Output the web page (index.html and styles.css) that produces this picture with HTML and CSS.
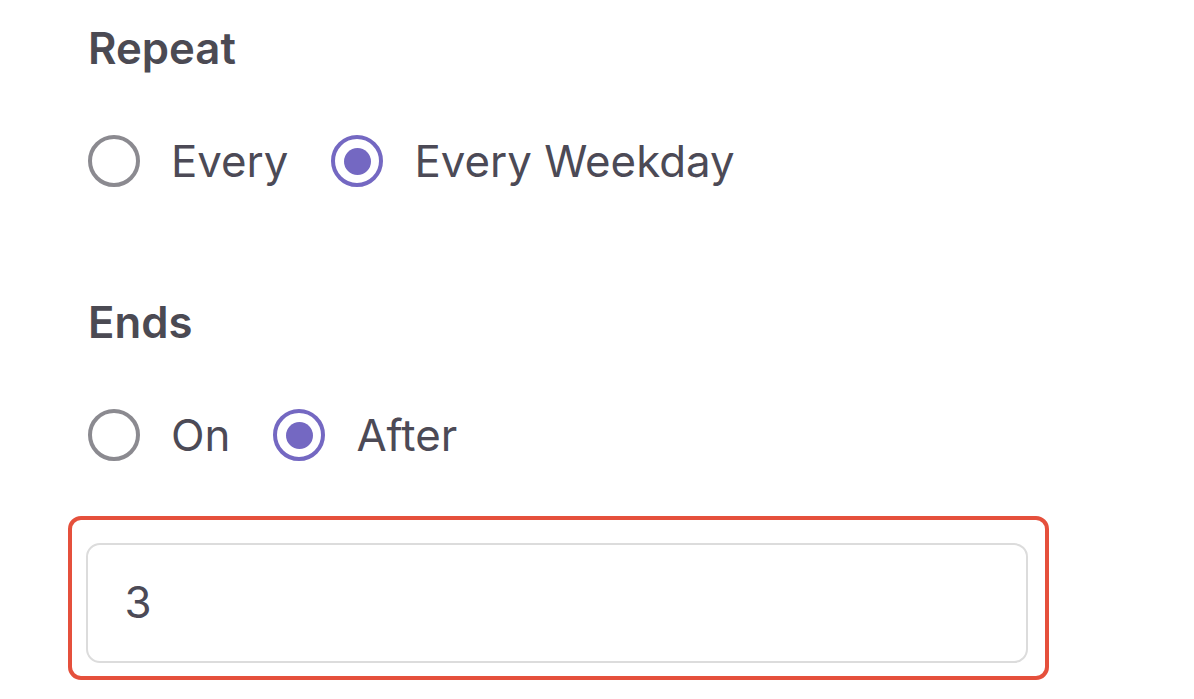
FILE: index.html
```html
<!DOCTYPE html>
<html lang="en">
<head>
<meta charset="utf-8">
<title>Repeat settings</title>
<link rel="stylesheet" href="styles.css">
</head>
<body>
<form class="form">
  <section class="section section-repeat">
    <h2 class="heading">Repeat</h2>
    <div class="options">
      <label class="option"><span class="radio"></span><span class="option-text">Every</span></label>
      <label class="option"><span class="radio radio-checked"></span><span class="option-text">Every Weekday</span></label>
    </div>
  </section>
  <section class="section section-ends">
    <h2 class="heading">Ends</h2>
    <div class="options">
      <label class="option"><span class="radio"></span><span class="option-text">On</span></label>
      <label class="option"><span class="radio radio-checked"></span><span class="option-text">After</span></label>
    </div>
  </section>
  <div class="highlight">
    <div class="input">3</div>
  </div>
</form>
</body>
</html>
```

FILE: styles.css
```css
html, body {
  margin: 0;
  padding: 0;
  background: #ffffff;
}

body {
  width: 1194px;
  height: 699px;
  overflow: hidden;
  font-family: Inter, "Noto Sans", sans-serif;
  color: #4c4a56;
}

.form {
  padding: 22px 0 0 68px;
}

.section {
  margin-left: 20px;
}

.section-ends {
  margin-top: 107px;
}

.heading {
  margin: 0;
  font-size: 43.7px;
  line-height: 53px;
  font-weight: 600;
  color: #4b4a53;
}

.options {
  display: flex;
  align-items: center;
  gap: 43px;
  margin-top: 58px;
  height: 56px;
}

.option {
  display: flex;
  align-items: center;
  gap: 31px;
}

.option-text {
  font-size: 43.8px;
  line-height: 53px;
  font-weight: 400;
}

.radio {
  box-sizing: border-box;
  width: 52px;
  height: 52px;
  border-radius: 50%;
  border: 4.5px solid #8b8a90;
  display: flex;
  align-items: center;
  justify-content: center;
}

.radio-checked {
  border-color: #7468c2;
}

.radio-checked::after {
  content: "";
  width: 27px;
  height: 27px;
  border-radius: 50%;
  background: #7468c2;
}

.highlight {
  margin-top: 53px;
  box-sizing: border-box;
  width: 981px;
  height: 164px;
  border: 4.5px solid #e5503c;
  border-radius: 13px;
  padding: 22.5px 16.5px 12.5px 13.5px;
}

.input {
  box-sizing: border-box;
  width: 942px;
  height: 120px;
  border: 2px solid #dcdcdc;
  border-radius: 14px;
  padding-left: 37px;
  display: flex;
  align-items: center;
  font-size: 43.8px;
  color: #4c4a56;
}
```
